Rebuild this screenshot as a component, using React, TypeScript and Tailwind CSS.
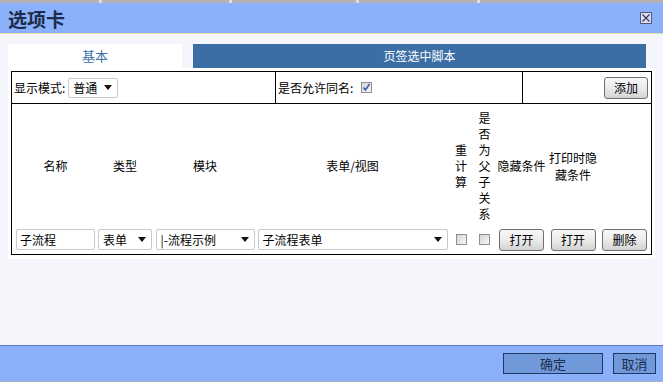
import type { ReactNode } from "react";

function Arrow() {
  return (
    <svg width="8" height="5" viewBox="0 0 8 5" className="shrink-0">
      <path d="M0 0h8L4 5z" fill="#111" />
    </svg>
  );
}

function FakeSelect({ value, width, className = "" }: { value: string; width: string; className?: string }) {
  return (
    <div
      className={`flex items-center justify-between rounded-[2px] border border-[#c9c9c9] bg-white pl-[4px] pr-[5px] text-[12px] text-black ${width} ${className}`}
    >
      <span className="whitespace-nowrap">{value}</span>
      <Arrow />
    </div>
  );
}

function Check({ checked = false }: { checked?: boolean }) {
  return (
    <span className="flex h-[11px] w-[11px] items-center justify-center border border-[#8e8f8f] bg-linear-to-br from-[#d6d6d6] to-[#f7f7f7]">
      {checked && (
        <svg width="9" height="9" viewBox="0 0 9 9">
          <path d="M1.5 4.5l2 2.5L7.5 1" fill="none" stroke="#3e5aa8" strokeWidth="1.6" />
        </svg>
      )}
    </span>
  );
}

function Btn({ children, className = "" }: { children: ReactNode; className?: string }) {
  return (
    <button
      className={`flex items-center justify-center rounded-[3px] border border-[#707070] bg-linear-to-b from-[#f7f7f7] via-[#ebebeb] to-[#d3d3d3] text-[12px] text-black ${className}`}
    >
      {children}
    </button>
  );
}

function Vertical({ text }: { text: string }) {
  return (
    <div className="flex flex-col items-center leading-[16px]">
      {text.split("").map((c, i) => (
        <span key={i}>{c}</span>
      ))}
    </div>
  );
}

export default function App() {
  const cols = "grid grid-cols-[81px_58px_102px_193px_24px_23px_51px_52px_51px]";

  return (
    <div className="flex h-[382px] w-[663px] flex-col overflow-hidden bg-[#f4f6fc] font-['Noto_Sans_CJK_SC','Microsoft_YaHei',sans-serif] text-black">
      {/* top strip */}
      <div className="relative h-[3px] bg-[#b3b3b3]">
        <span className="absolute left-[99px] top-0 h-[3px] w-[3px] bg-[#dedede]" />
        <span className="absolute left-[229px] top-0 h-[3px] w-[3px] bg-[#dedede]" />
        <span className="absolute left-[356px] top-0 h-[3px] w-[3px] bg-[#dedede]" />
        <span className="absolute left-[477px] top-0 h-[3px] w-[3px] bg-[#dedede]" />
      </div>

      {/* title bar */}
      <div className="flex h-[31px] items-center justify-between border-b border-[#e4e0a8] bg-[#8bb1fb] pl-[8px] pr-[11px]">
        <span className="text-[19px] font-bold leading-none text-[#1b2d4b]">选项卡</span>
        <span className="flex h-[12px] w-[12px] items-center justify-center border border-[#55577a] bg-[#d9dcf2]">
          <svg width="8" height="8" viewBox="0 0 8 8">
            <path d="M0.5 0.5l7 7M7.5 0.5l-7 7" stroke="#3a3c5c" strokeWidth="1.2" />
          </svg>
        </span>
      </div>

      {/* body */}
      <div className="flex-1 px-[8px] pt-[10px]">
        <div className="flex h-[24px] items-stretch">
          <div className="flex w-[174px] items-center justify-center bg-white text-[13px] text-[#3b6ea5]">基本</div>
          <div className="w-[11px]" />
          <div className="flex w-[453px] items-center justify-center bg-[#3b6ea5] text-[12px] text-white">页签选中脚本</div>
        </div>

        <div className="bg-white px-[3px] pb-[4px] pt-[3px]">
          <div className="border border-black">
            {/* row 1 */}
            <div className="flex h-[32px] border-b border-black text-[12px]">
              <div className="flex w-[264px] items-center border-r border-black pl-[2px]">
                <span>显示模式:</span>
                <FakeSelect value="普通" width="w-[50px]" className="ml-[3px] h-[20px]" />
              </div>
              <div className="flex w-[247px] items-center gap-[8px] border-r border-black pl-[2px]">
                <span>是否允许同名:</span>
                <Check checked />
              </div>
              <div className="flex flex-1 items-center justify-end pr-[3px]">
                <Btn className="h-[22px] w-[44px]">添加</Btn>
              </div>
            </div>

            {/* row 2 */}
            <div className="pl-[3px] text-[12px]">
              <div className={`${cols} h-[124px] items-center text-center`}>
                <span>名称</span>
                <span>类型</span>
                <span>模块</span>
                <span>表单/视图</span>
                <Vertical text="重计算" />
                <Vertical text="是否为父子关系" />
                <span className="whitespace-nowrap">隐藏条件</span>
                <span className="leading-[17px]">打印时隐藏条件</span>
                <span />
              </div>
              <div className={`${cols} h-[26px] items-center pb-[3px]`}>
                <div className="pl-[1px]">
                  <div className="flex h-[21px] w-[79px] items-center rounded-[2px] border border-[#c9c9c9] pl-[3px]">子流程</div>
                </div>
                <div className="flex justify-center">
                  <FakeSelect value="表单" width="w-[54px]" className="h-[21px]" />
                </div>
                <div className="flex justify-center">
                  <FakeSelect value="|-流程示例" width="w-[99px]" className="h-[21px]" />
                </div>
                <div className="flex justify-center">
                  <FakeSelect value="子流程表单" width="w-[190px]" className="h-[21px]" />
                </div>
                <div className="flex justify-center">
                  <Check />
                </div>
                <div className="flex justify-center">
                  <Check />
                </div>
                <div className="flex justify-center">
                  <Btn className="h-[22px] w-[45px]">打开</Btn>
                </div>
                <div className="flex justify-center">
                  <Btn className="h-[22px] w-[45px]">打开</Btn>
                </div>
                <div className="flex justify-center">
                  <Btn className="h-[22px] w-[45px]">删除</Btn>
                </div>
              </div>
            </div>
          </div>
        </div>
      </div>

      {/* footer */}
      <div className="flex h-[37px] items-center justify-end gap-[10px] border-b border-t border-b-[#a9b3c4] border-t-[#5a7fc0] bg-[#8bb1fb] pr-[7px]">
        <button className="flex h-[21px] w-[100px] items-center justify-center border border-[#1e3763] bg-[#6f99d9] text-[13px] text-[#1b2d4b]">
          确定
        </button>
        <button className="flex h-[21px] w-[43px] items-center justify-center border border-[#1e3763] bg-[#6f99d9] text-[13px] text-[#1b2d4b]">
          取消
        </button>
      </div>
    </div>
  );
}
